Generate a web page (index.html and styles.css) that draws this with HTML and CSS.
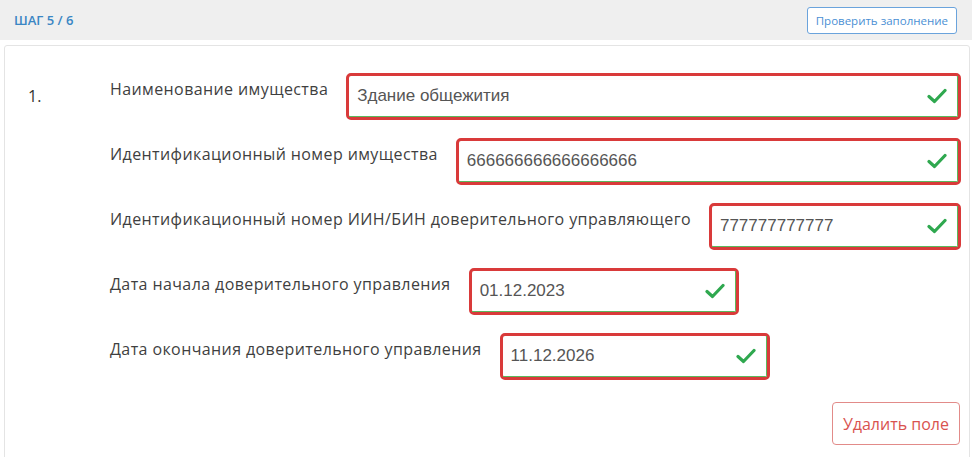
FILE: index.html
```html
<!DOCTYPE html>
<html lang="ru">
<head>
    <meta charset="UTF-8">
    <meta name="viewport" content="width=device-width, initial-scale=1.0">
    <title>Шаг 5 / 6</title>
    <link rel="stylesheet" href="styles.css">
</head>
<body>

    <div class="step-bar">
        <span class="step-title">ШАГ 5 / 6</span>
        <button class="btn-check">Проверить заполнение</button>
    </div>

    <div class="card">
        <div class="item">
            <div class="item-num">1.</div>
            <div class="fields">
                <div class="row">
                    <label class="label">Наименование имущества</label>
                    <div class="hl grow">
                        <div class="field">
                            <span class="value">Здание общежития</span>
                            <svg class="ok" viewBox="0 0 20 16"><path d="M2 8.5 L7.5 13.5 L18 2.5"/></svg>
                        </div>
                    </div>
                </div>
                <div class="row">
                    <label class="label">Идентификационный номер имущества</label>
                    <div class="hl grow">
                        <div class="field">
                            <span class="value">666666666666666666</span>
                            <svg class="ok" viewBox="0 0 20 16"><path d="M2 8.5 L7.5 13.5 L18 2.5"/></svg>
                        </div>
                    </div>
                </div>
                <div class="row">
                    <label class="label">Идентификационный номер ИИН/БИН доверительного управляющего</label>
                    <div class="hl grow">
                        <div class="field">
                            <span class="value">777777777777</span>
                            <svg class="ok" viewBox="0 0 20 16"><path d="M2 8.5 L7.5 13.5 L18 2.5"/></svg>
                        </div>
                    </div>
                </div>
                <div class="row">
                    <label class="label">Дата начала доверительного управления</label>
                    <div class="hl date">
                        <div class="field">
                            <span class="value">01.12.2023</span>
                            <svg class="ok" viewBox="0 0 20 16"><path d="M2 8.5 L7.5 13.5 L18 2.5"/></svg>
                        </div>
                    </div>
                </div>
                <div class="row">
                    <label class="label">Дата окончания доверительного управления</label>
                    <div class="hl date">
                        <div class="field">
                            <span class="value">11.12.2026</span>
                            <svg class="ok" viewBox="0 0 20 16"><path d="M2 8.5 L7.5 13.5 L18 2.5"/></svg>
                        </div>
                    </div>
                </div>
                <div class="actions">
                    <button class="btn-remove">Удалить поле</button>
                </div>
            </div>
        </div>
    </div>

</body>
</html>
```

FILE: styles.css
```css
body {
    margin: 0;
    font-family: "Open Sans", "Noto Sans", sans-serif;
    background: #fff;
    color: #3a3a3a;
}
.step-bar {
    display: flex;
    align-items: center;
    justify-content: space-between;
    height: 40px;
    margin-right: 2px;
    padding: 0 15px 0 14px;
    background-color: #efefef;
}
.step-title {
    font-size: 13px;
    font-weight: 600;
    color: #3a86c4;
}
.btn-check {
    height: 27px;
    padding: 0 8px;
    font-family: "Open Sans", sans-serif;
    font-size: 11.5px;
    color: #4a8fd4;
    background: #fff;
    border: 1px solid #6aa3dc;
    border-radius: 3px;
}
.card {
    margin: 5px 4px 0 4px;
    padding: 27px 8px 20px 0;
    border: 1px solid #e4e4e4;
    border-radius: 3px;
    min-height: 380px;
}
.item {
    display: flex;
}
.item-num {
    width: 82px;
    padding: 12px 0 0 23px;
    font-size: 16px;
    color: #333;
}
.fields {
    flex: 1;
    display: flex;
    flex-direction: column;
    gap: 18px;
}
.row {
    display: flex;
    align-items: flex-start;
    gap: 18px;
}
.label {
    padding-top: 4px;
    font-size: 16px;
    letter-spacing: 0.4px;
    line-height: 24px;
    white-space: nowrap;
    color: #3f3f3f;
}
.hl {
    border: 3px solid #d93a3a;
    border-radius: 5px;
}
.hl.grow {
    flex: 1;
}
.hl.date {
    width: 264px;
}
.field {
    display: flex;
    align-items: center;
    justify-content: space-between;
    height: 40px;
    padding: 0 10px 0 8px;
    border-right: 1px solid #5cb85c;
    border-bottom: 1px solid #5cb85c;
    border-radius: 0 0 2px 0;
}
.value {
    font-family: "Liberation Sans", Arial, sans-serif;
    font-size: 17px;
    color: #555;
}
.ok {
    width: 20px;
    height: 16px;
    fill: none;
    stroke: #2fa84f;
    stroke-width: 3.2;
    stroke-linecap: round;
    stroke-linejoin: round;
}
.actions {
    display: flex;
    justify-content: flex-end;
    margin-top: 4px;
    padding-right: 1px;
}
.btn-remove {
    height: 43px;
    padding: 0 10px;
    font-family: "Open Sans", sans-serif;
    font-size: 16px;
    color: #d9534f;
    background: #fff;
    border: 1px solid #e28b89;
    border-radius: 4px;
}
```
